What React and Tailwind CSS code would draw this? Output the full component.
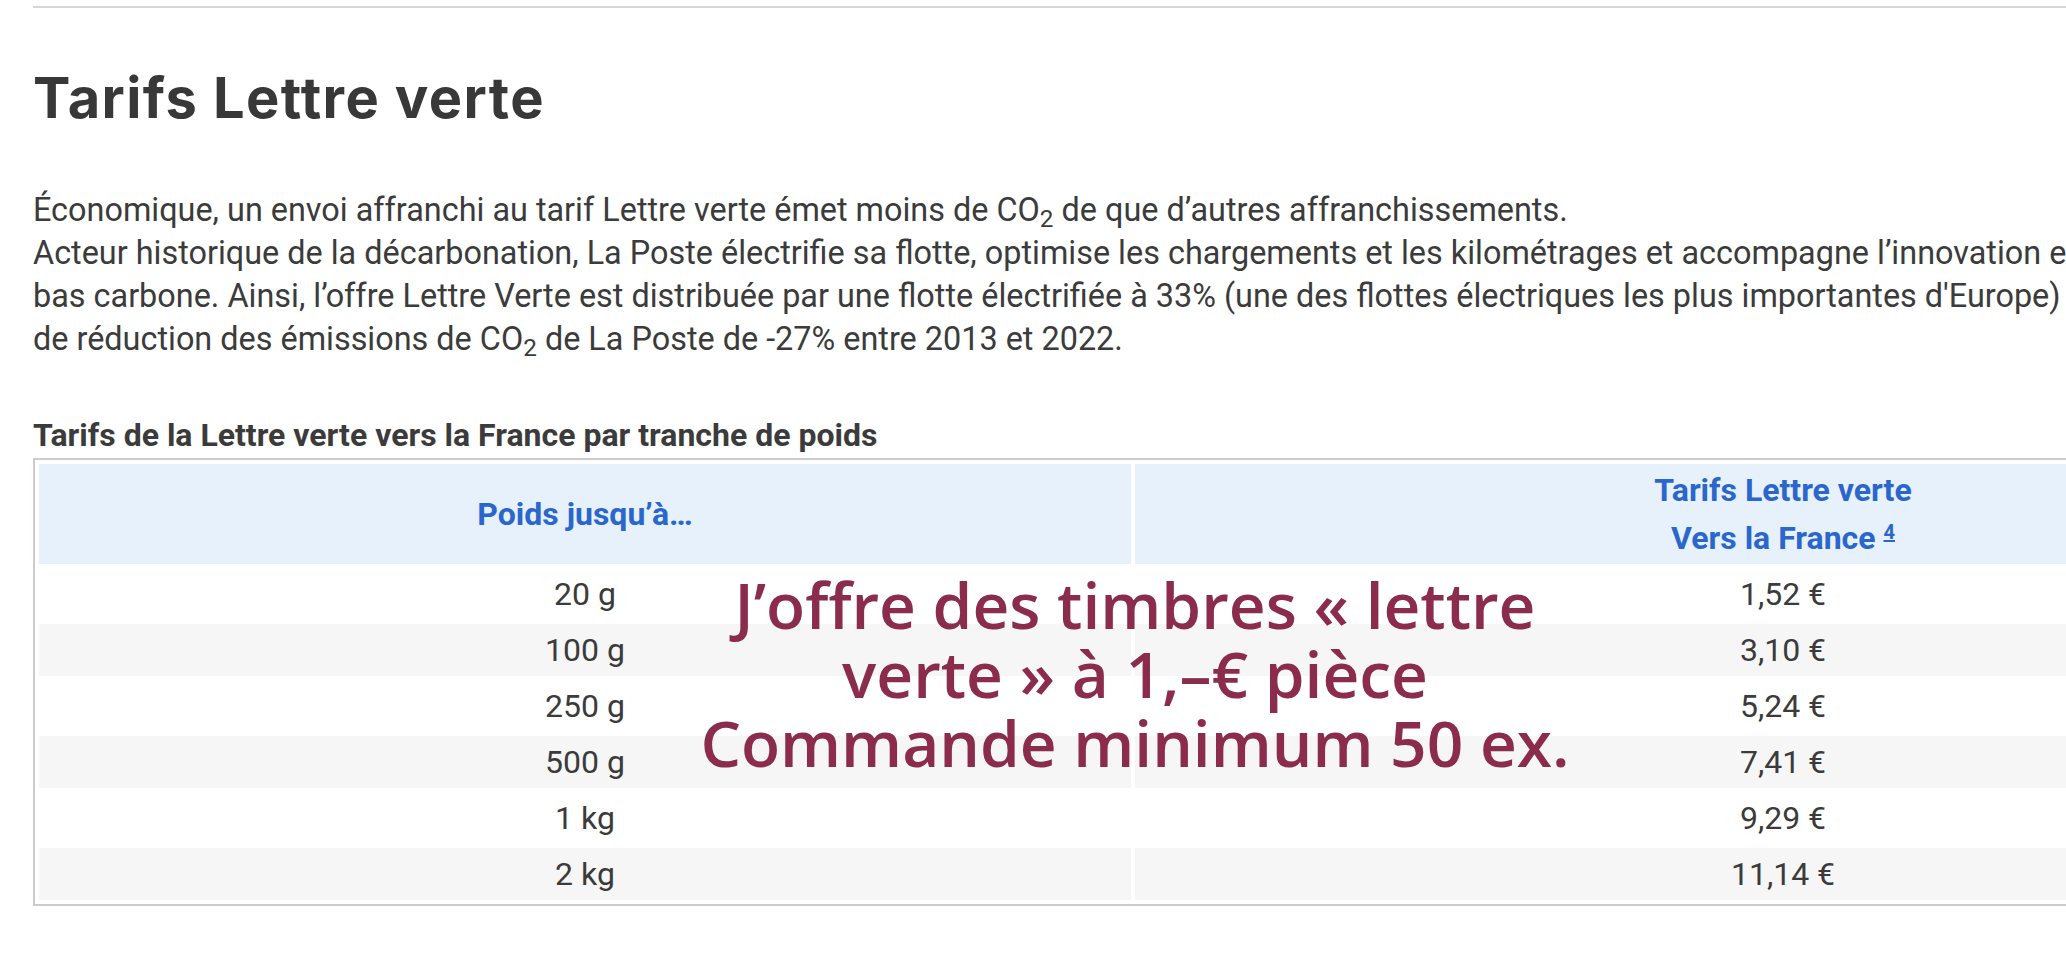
export default function App() {
  const rows = [
    ["20 g", "1,52 €"],
    ["100 g", "3,10 €"],
    ["250 g", "5,24 €"],
    ["500 g", "7,41 €"],
    ["1 kg", "9,29 €"],
    ["2 kg", "11,14 €"],
  ];
  return (
    <div className="w-[2066px] h-[970px] overflow-hidden bg-white text-[#3b3b3b] font-['Roboto',sans-serif]">
      <div className="relative w-[2440px] pl-[33px]">
        <div className="mt-[6px] h-[2px] w-[2404px] bg-[#d6d6d6]" />
        <h2 className="mt-[57px] font-['Inter',sans-serif] text-[56px] leading-[67px] font-bold tracking-[0.025em] text-[#383838]">
          Tarifs Lettre verte
        </h2>
        <p className="mt-[57px] whitespace-nowrap text-[32.4px] leading-[43px]">
          Économique, un envoi affranchi au tarif Lettre verte émet moins de CO<sub>2</sub> de que d’autres affranchissements.
          <br />
          Acteur historique de la décarbonation, La Poste électrifie sa flotte, optimise les chargements et les kilométrages et accompagne l’innovation en matière de transport
          <br />
          bas carbone. Ainsi, l’offre Lettre Verte est distribuée par une flotte électrifiée à 33% (une des flottes électriques les plus importantes d'Europe) et contribue à l’objectif
          <br />
          de réduction des émissions de CO<sub>2</sub> de La Poste de -27% entre 2013 et 2022.
        </p>
        <div className="mt-[54px] text-[32px] leading-[40px] font-bold whitespace-nowrap">
          Tarifs de la Lettre verte vers la France par tranche de poids
        </div>
        <table className="mt-[3px] w-[2404px] table-fixed border-separate border-spacing-1 border-2 border-[#cccccc] text-[32px]">
          <colgroup>
            <col className="w-[1092px]" />
            <col className="w-[1296px]" />
          </colgroup>
          <thead>
            <tr>
              <th className="h-[100px] p-0 bg-[#e7f1fc] text-[#2a66cc] font-bold leading-[48px] text-center align-middle">
                Poids jusqu’à…
              </th>
              <th className="h-[100px] p-0 bg-[#e7f1fc] text-[#2a66cc] font-bold leading-[48px] text-center align-middle">
                Tarifs Lettre verte
                <br />
                Vers la France <sup className="text-[20px] underline">4</sup>
              </th>
            </tr>
          </thead>
          <tbody>
            {rows.map((r, i) => (
              <tr key={i}>
                <td className={`h-[52px] p-0 text-center align-middle leading-[52px] ${i % 2 === 1 ? "bg-[#f6f6f6]" : "bg-white"}`}>
                  {r[0]}
                </td>
                <td className={`h-[52px] p-0 text-center align-middle leading-[52px] ${i % 2 === 1 ? "bg-[#f6f6f6]" : "bg-white"}`}>
                  {r[1]}
                </td>
              </tr>
            ))}
          </tbody>
        </table>
        <div className="absolute left-[635px] top-[564px] w-[1000px] text-center font-['Open_Sans',sans-serif] font-semibold text-[64px] leading-[69px] text-[#8b2c4c] whitespace-nowrap">
          J’offre des timbres « lettre
          <br />
          verte » à 1,–€ pièce
          <br />
          Commande minimum 50 ex.
        </div>
      </div>
    </div>
  );
}
